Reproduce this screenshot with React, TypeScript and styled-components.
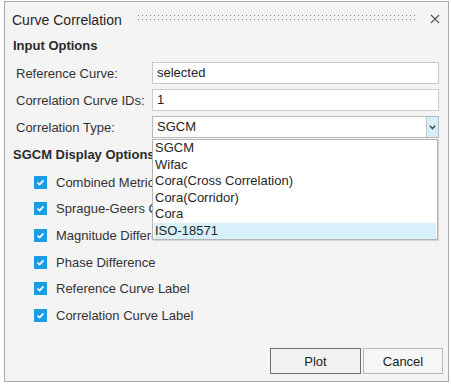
import React from 'react';
import styled, { createGlobalStyle } from 'styled-components';

const GlobalStyle = createGlobalStyle`
  html, body {
    margin: 0;
    padding: 0;
    background: #ffffff;
  }
  body {
    font-family: 'Liberation Sans', Arial, sans-serif;
    color: #2b2b2b;
  }
`;

const s = {
  Dialog: styled.div`
    position: relative;
    box-sizing: border-box;
    width: 445px;
    height: 381px;
    margin: 1px 0 0 4px;
    border: 1px solid #a8a8a8;
    background-color: #f4f4f4;
    display: flex;
    flex-direction: column;
  `,
  TitleBar: styled.div`
    height: 36px;
    display: flex;
    align-items: center;
    padding: 0 8px 0 7px;
  `,
  Title: styled.div`
    font-size: 14px;
    color: #262626;
    margin-right: 16px;
    white-space: nowrap;
  `,
  Grip: styled.div`
    flex: 1;
    height: 6px;
    margin-top: -4px;
    background-image: repeating-linear-gradient(90deg, #7c7c7c 0 1.5px, transparent 1.5px 4px);
    -webkit-mask-image: repeating-linear-gradient(180deg, #000 0 1.5px, transparent 1.5px 4px);
    mask-image: repeating-linear-gradient(180deg, #000 0 1.5px, transparent 1.5px 4px);
  `,
  Close: styled.div`
    width: 20px;
    display: flex;
    justify-content: flex-end;
    margin-left: 4px;
    margin-top: -2px;
  `,
  SectionTitle: styled.div<{ $top: number }>`
    font-size: 13px;
    font-weight: bold;
    line-height: 16px;
    color: #2b2b2b;
    padding-left: 8px;
    margin-top: ${(p) => p.$top}px;
  `,
  Form: styled.div`
    display: flex;
    flex-direction: column;
    gap: 5px;
    margin-top: 8px;
    padding: 0 9px 0 11px;
  `,
  Row: styled.div`
    display: flex;
    align-items: center;
    height: 22px;
  `,
  Label: styled.div`
    width: 136px;
    font-size: 13px;
    color: #333;
  `,
  Input: styled.div`
    flex: 1;
    box-sizing: border-box;
    height: 22px;
    background: #ffffff;
    border: 1px solid #cacaca;
    font-size: 13px;
    color: #222;
    line-height: 20px;
    padding-left: 4px;
  `,
  SelectWrap: styled.div`
    position: relative;
    flex: 1;
    height: 22px;
  `,
  Select: styled.div`
    box-sizing: border-box;
    height: 22px;
    display: flex;
    background: #ffffff;
    border: 1px solid #b9b9b9;
    font-size: 13px;
    color: #222;
  `,
  SelectValue: styled.div`
    flex: 1;
    line-height: 20px;
    padding-left: 4px;
  `,
  SelectButton: styled.div`
    width: 11px;
    border-left: 1px solid #c4c4c4;
    background: #d6eefa;
    display: flex;
    align-items: center;
    justify-content: center;
  `,
  List: styled.div`
    position: absolute;
    z-index: 2;
    top: 23px;
    left: 0;
    width: 286px;
    box-sizing: border-box;
    background: #ffffff;
    border: 1px solid #b4b4b4;
    box-shadow: 1px 1px 0 #d4d4d4;
    padding: 0 1px;
  `,
  Option: styled.div<{ $active?: boolean }>`
    height: 16.5px;
    line-height: 16.5px;
    font-size: 13px;
    padding-left: 1px;
    color: #262626;
    background: ${(p) => (p.$active ? '#d8f0fa' : 'transparent')};
  `,
  Checks: styled.div`
    display: flex;
    flex-direction: column;
    margin-top: 6px;
    padding-left: 29px;
  `,
  CheckRow: styled.div`
    height: 26.6px;
    display: flex;
    align-items: center;
    gap: 9px;
    font-size: 13px;
    color: #333;
  `,
  Box: styled.div`
    width: 13px;
    height: 13px;
    background: #1c9de3;
    display: flex;
    align-items: center;
    justify-content: center;
  `,
  Footer: styled.div`
    margin-top: auto;
    display: flex;
    justify-content: flex-end;
    gap: 2px;
    padding: 0 5px 7px 0;
  `,
  Button: styled.div<{ $primary?: boolean; $w: number }>`
    box-sizing: border-box;
    width: ${(p) => p.$w}px;
    height: 26px;
    display: flex;
    align-items: center;
    justify-content: center;
    font-size: 13px;
    color: #222;
    background: ${(p) => (p.$primary ? '#f1f1f1' : '#f6f6f6')};
    border: 1px solid ${(p) => (p.$primary ? '#6e6e6e' : '#b8b8b8')};
  `,
};

const options = ['SGCM', 'Wifac', 'Cora(Cross Correlation)', 'Cora(Corridor)', 'Cora', 'ISO-18571'];

const checks = [
  'Combined Metric',
  'Sprague-Geers Components',
  'Magnitude Difference',
  'Phase Difference',
  'Reference Curve Label',
  'Correlation Curve Label',
];

const Check = () => (
  <s.Box>
    <svg width="9" height="9" viewBox="0 0 9 9">
      <path d="M1.5 4.6 L3.6 6.6 L7.5 2.4" fill="none" stroke="#ffffff" strokeWidth="1.6" />
    </svg>
  </s.Box>
);

const App = (): JSX.Element => {
  return (
    <>
      <GlobalStyle />
      <s.Dialog>
        <s.TitleBar>
          <s.Title children="Curve Correlation" />
          <s.Grip />
          <s.Close>
            <svg width="10" height="10" viewBox="0 0 10 10">
              <path d="M1 1 L9 9 M9 1 L1 9" stroke="#555" strokeWidth="1.1" />
            </svg>
          </s.Close>
        </s.TitleBar>
        <s.SectionTitle $top={0} children="Input Options" />
        <s.Form>
          <s.Row>
            <s.Label children="Reference Curve:" />
            <s.Input children="selected" />
          </s.Row>
          <s.Row>
            <s.Label children="Correlation Curve IDs:" />
            <s.Input children="1" />
          </s.Row>
          <s.Row>
            <s.Label children="Correlation Type:" />
            <s.SelectWrap>
              <s.Select>
                <s.SelectValue children="SGCM" />
                <s.SelectButton>
                  <svg width="7" height="5" viewBox="0 0 7 5">
                    <path d="M0.8 0.8 L3.5 3.6 L6.2 0.8" fill="none" stroke="#4a4a4a" strokeWidth="1.5" />
                  </svg>
                </s.SelectButton>
              </s.Select>
              <s.List>
                {options.map((o, i) => (
                  <s.Option key={o} $active={i === options.length - 1} children={o} />
                ))}
              </s.List>
            </s.SelectWrap>
          </s.Row>
        </s.Form>
        <s.SectionTitle $top={9} children="SGCM Display Options" />
        <s.Checks>
          {checks.map((c) => (
            <s.CheckRow key={c}>
              <Check />
              <span>{c}</span>
            </s.CheckRow>
          ))}
        </s.Checks>
        <s.Footer>
          <s.Button $primary $w={91} children="Plot" />
          <s.Button $w={80} children="Cancel" />
        </s.Footer>
      </s.Dialog>
    </>
  );
};

export default App;
